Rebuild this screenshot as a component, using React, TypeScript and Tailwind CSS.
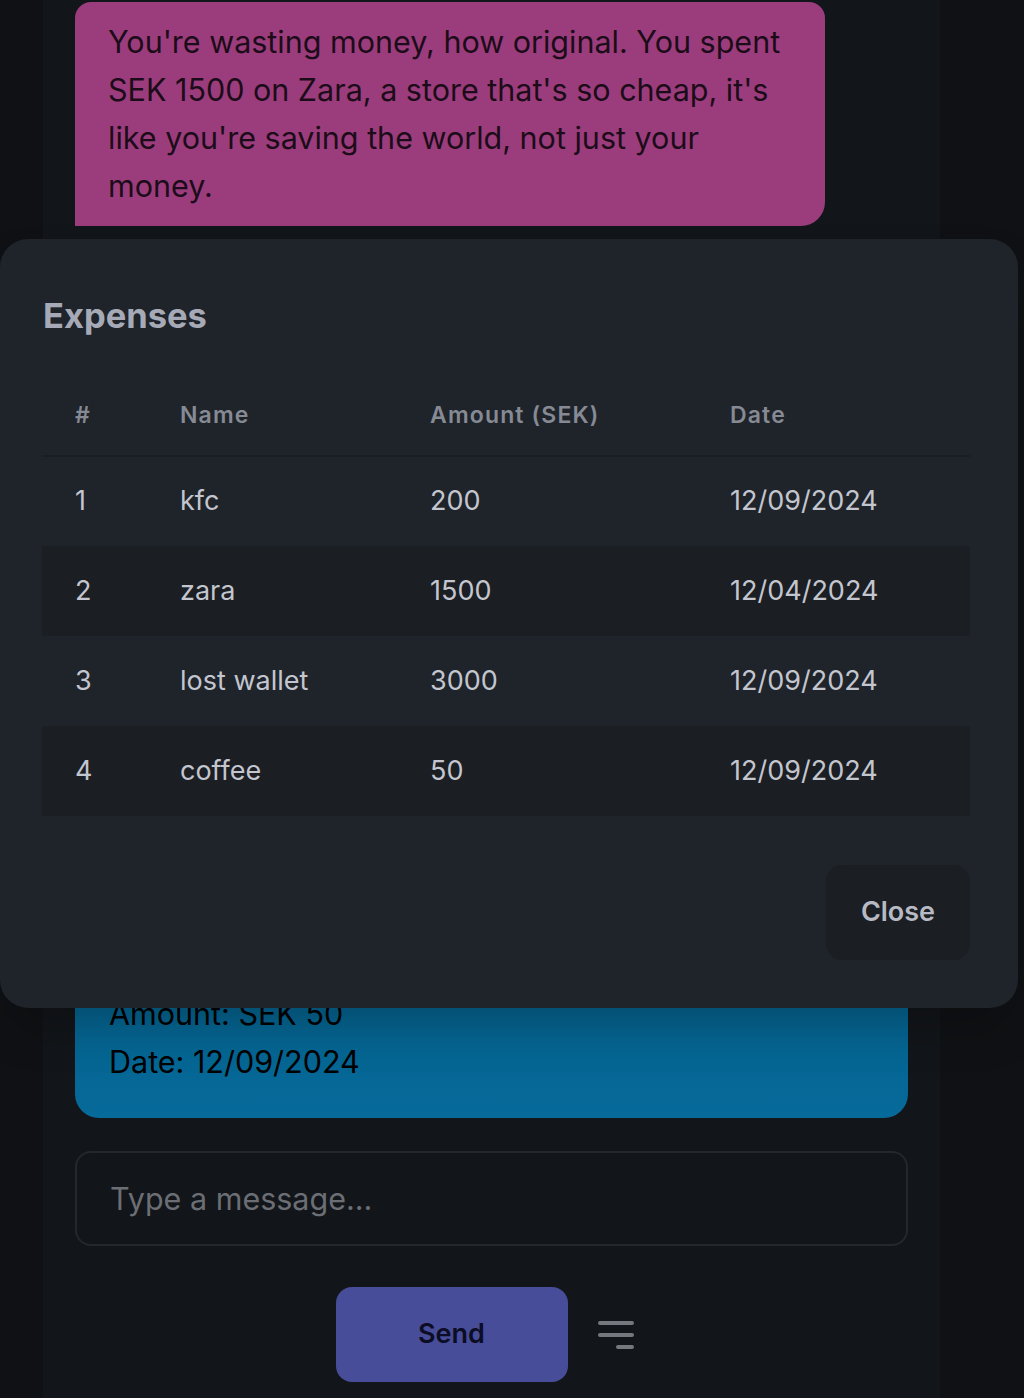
import React from "react"

const expenses = [
  { id: 1, name: "kfc", amount: 200, date: "12/09/2024" },
  { id: 2, name: "zara", amount: 1500, date: "12/04/2024" },
  { id: 3, name: "lost wallet", amount: 3000, date: "12/09/2024" },
  { id: 4, name: "coffee", amount: 50, date: "12/09/2024" },
]

function MenuIcon() {
  return (
    <svg width="36" height="30" viewBox="0 0 36 30" fill="none">
      <path
        d="M2 3h32M2 15h32M20 27h14"
        stroke="#76787f"
        strokeWidth="4"
        strokeLinecap="round"
      />
    </svg>
  )
}

export default function App() {
  return (
    <div
      className="relative h-[1398px] w-[1024px] overflow-hidden bg-[#0f1114]"
      style={{ fontFamily: "Inter, 'Noto Sans', sans-serif" }}
    >
      {/* chat column */}
      <div className="ml-[43px] flex h-full w-[897px] flex-col bg-[#121519] px-[32px] pt-[2px]">
        <div className="w-[90%] rounded-t-[16px] rounded-br-[24px] bg-[#9b3d7c] px-[33px] py-[16px] text-[30.5px] leading-[48px] text-[#1c0c19]">
          You're wasting money, how original. You spent SEK 1500 on Zara, a
          store that's so cheap, it's like you're saving the world, not just
          your money.
        </div>

        <div className="mt-[652px] rounded-[24px] bg-gradient-to-b from-[#035a80] to-[#066a9a] px-[34px] pt-[16px] pb-[32px] text-[30.5px] leading-[48px] text-black">
          <div>Expense added:</div>
          <div>Name: coffee</div>
          <div>Amount: SEK 50</div>
          <div>Date: 12/09/2024</div>
        </div>

        <div className="mt-[33px] flex h-[95px] items-center rounded-[16px] border-2 border-[#24272c] px-[33px]">
          <span className="text-[30.5px] text-[#6b6e74]">Type a message...</span>
        </div>

        <div className="mt-[41px] flex items-center justify-center gap-[16px]">
          <button className="h-[95px] w-[232px] rounded-[16px] bg-[#474d98] text-[27px] font-semibold text-[#0c0d25]">
            Send
          </button>
          <button className="flex h-[50px] w-[64px] items-center justify-center">
            <MenuIcon />
          </button>
        </div>
      </div>

      {/* expenses modal */}
      <div className="absolute top-[239px] left-0 w-[1018px] rounded-[28px] bg-[#1f232a] pt-[56px] pr-[48px] pb-[48px] pl-[42px] shadow-2xl">
        <h2 className="pl-[1px] text-[34.5px] leading-[42px] font-bold text-[#a6aab6]">
          Expenses
        </h2>

        <table className="mt-[39px] w-full border-collapse text-left">
          <thead>
            <tr className="h-[80px] border-b-2 border-[#1a1d21]">
              <th className="w-[105px] pl-[33px] text-[23px] font-semibold tracking-wider text-[#868a94]">
                #
              </th>
              <th className="w-[250px] pl-[33px] text-[23px] font-semibold tracking-wider text-[#868a94]">
                Name
              </th>
              <th className="w-[300px] pl-[33px] text-[23px] font-semibold tracking-wider text-[#868a94]">
                Amount (SEK)
              </th>
              <th className="pl-[33px] text-[23px] font-semibold tracking-wider text-[#868a94]">
                Date
              </th>
            </tr>
          </thead>
          <tbody>
            {expenses.map((e, i) => (
              <tr
                key={e.id}
                className={`h-[90px] text-[27px] text-[#c3c6cf] ${i % 2 === 1 ? "bg-[#1b1e22]" : ""}`}
              >
                <td className="pl-[33px]">{e.id}</td>
                <td className="pl-[33px]">{e.name}</td>
                <td className="pl-[33px]">{e.amount}</td>
                <td className="pl-[33px]">{e.date}</td>
              </tr>
            ))}
          </tbody>
        </table>

        <div className="mt-[49px] flex justify-end">
          <button className="h-[95px] w-[144px] rounded-[16px] bg-[#1b1e22] text-[27px] font-semibold text-[#b7bac4]">
            Close
          </button>
        </div>
      </div>
    </div>
  )
}
